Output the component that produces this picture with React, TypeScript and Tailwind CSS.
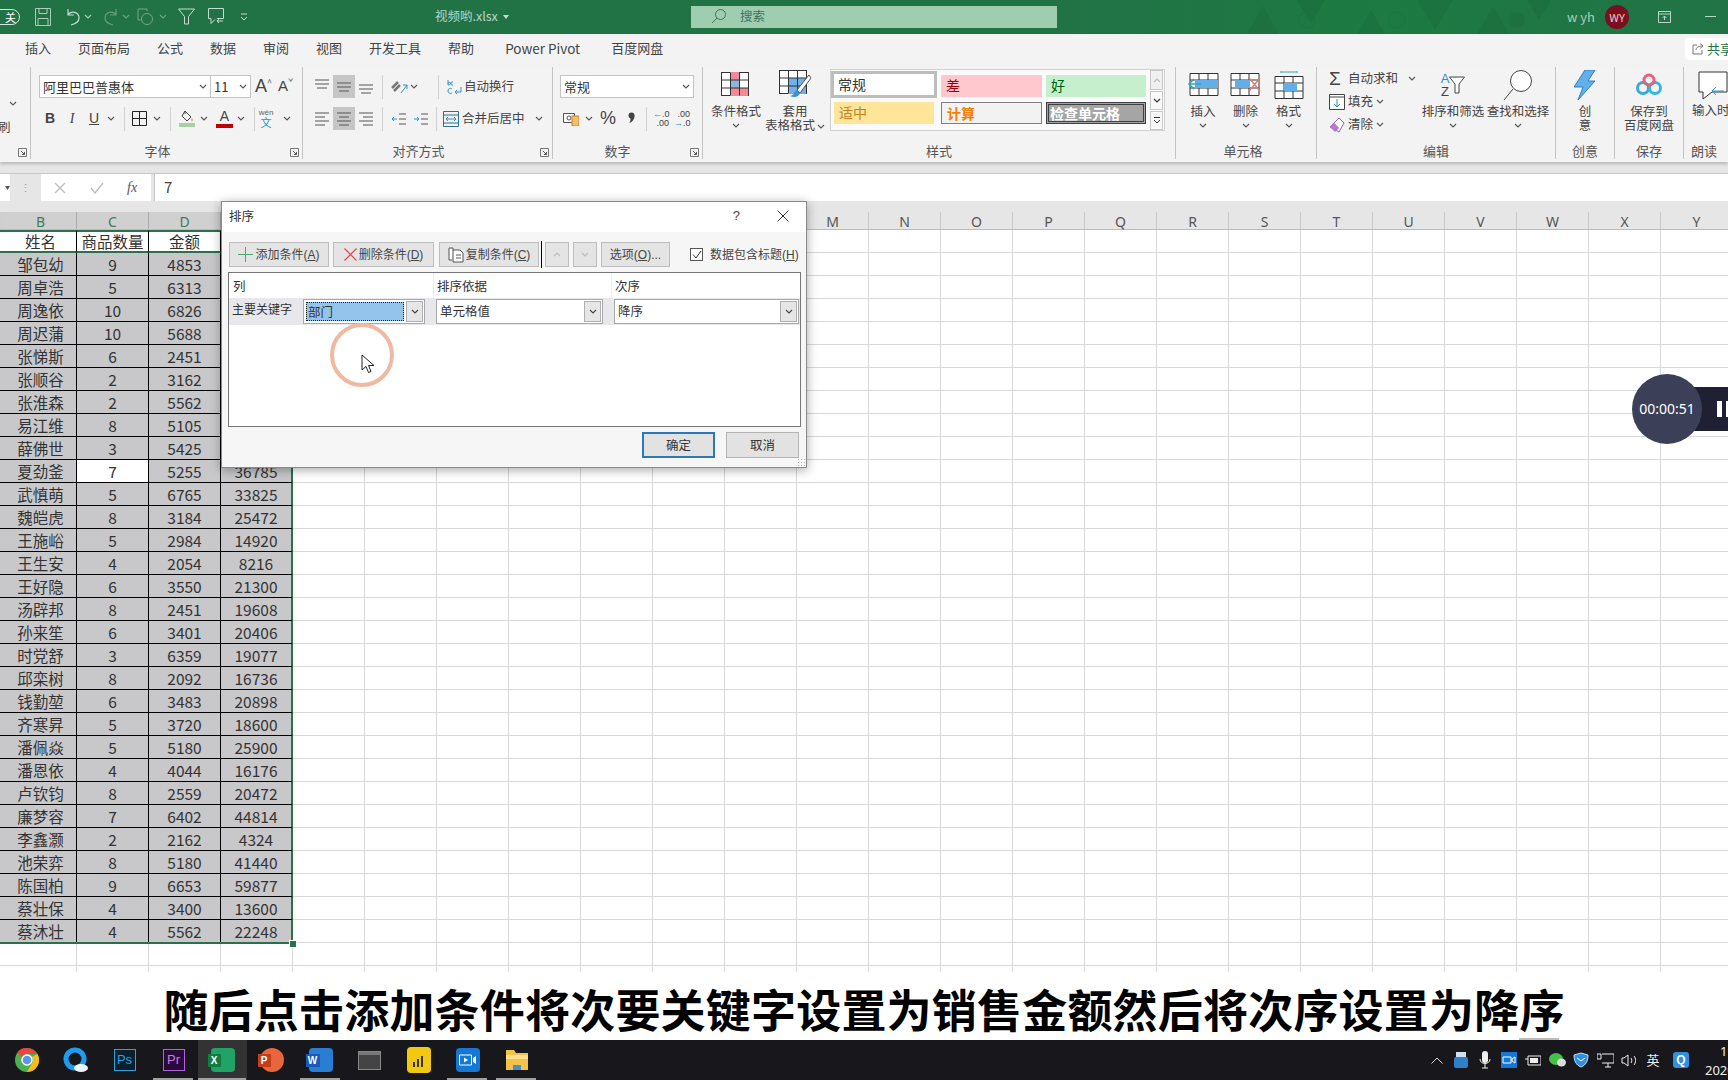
import React from "react";

const people: [string, number, number][] = [
  ["邹包幼", 9, 4853], ["周卓浩", 5, 6313], ["周逸依", 10, 6826], ["周迟蒲", 10, 5688], ["张悌斯", 6, 2451],
  ["张顺谷", 2, 3162], ["张淮森", 2, 5562], ["易江维", 8, 5105], ["薛佛世", 3, 5425], ["夏劲釜", 7, 5255],
  ["武慎萌", 5, 6765], ["魏皑虎", 8, 3184], ["王施峪", 5, 2984], ["王生安", 4, 2054], ["王好隐", 6, 3550],
  ["汤辟邦", 8, 2451], ["孙来笙", 6, 3401], ["时党舒", 3, 6359], ["邱栾树", 8, 2092], ["钱勤堃", 6, 3483],
  ["齐寒昇", 5, 3720], ["潘佩焱", 5, 5180], ["潘恩依", 4, 4044], ["卢钦钧", 8, 2559], ["廉梦容", 7, 6402],
  ["李鑫灏", 2, 2162], ["池荣弈", 8, 5180], ["陈国柏", 9, 6653], ["蔡壮保", 4, 3400], ["蔡沐壮", 4, 5562],
];
const restCols = "FGHIJKLMNOPQRSTUVWXY".split("");

const Chev = ({ c = "#555", className = "" }: { c?: string; className?: string }) => (
  <svg width="8" height="5" viewBox="0 0 8 5" className={className}><path d="M1 1l3 3 3-3" fill="none" stroke={c} strokeWidth="1.1" /></svg>
);
const Sep = () => <div className="w-px h-[24px] bg-[#d0d0d0] shrink-0" />;
const Launcher = () => (
  <svg width="9" height="9" viewBox="0 0 9 9" className="absolute right-[3px] bottom-[2px]"><path d="M.5 8.500v-8h8v8z" fill="none" stroke="#777" /><path d="M3 3l3.500 3.500M6.500 4v2.500H4" fill="none" stroke="#555" /></svg>
);

function Group({ w, label, labelClass = "", children }: { w: string; label?: string; labelClass?: string; children?: React.ReactNode }) {
  return (
    <div className={`relative shrink-0 h-[92px] flex flex-col border-r border-[#c4c4c4] ${w}`}>
      <div className="h-[76px] overflow-hidden">{children}</div>
      <div className={`h-[16px] leading-[16px] text-[13px] text-[#555] text-center whitespace-nowrap ${labelClass}`}>{label}</div>
    </div>
  );
}

function Big({ w, icon, lines, chev = true }: { w: string; icon: React.ReactNode; lines: string[]; chev?: boolean }) {
  return (
    <div className={`flex flex-col items-center pt-[4px] shrink-0 ${w}`}>
      <div className="h-[28px] flex items-center justify-center">{icon}</div>
      <div className="mt-[5px] text-[12.500px] leading-[14px] text-[#444] text-center whitespace-nowrap">
        {lines.map((l) => <div key={l}>{l}</div>)}
      </div>
      {chev && lines.length === 1 && <Chev className="mt-[5px]" />}
    </div>
  );
}

const Lines = ({ a }: { a: "l" | "c" | "r" }) => {
  const x = a === "l" ? 1 : a === "c" ? 3 : 5;
  return (
    <svg width="16" height="16" viewBox="0 0 16 16">
      {[2, 6, 10, 14].map((y, i) => <path key={y} d={`M${i % 2 ? x : 1} ${y}h${i % 2 ? 10 : 14}`} stroke="#555" />)}
    </svg>
  );
};
const VLines = ({ y }: { y: number }) => (
  <svg width="16" height="16" viewBox="0 0 16 16"><path d={`M1 ${y}h14M1 ${y + 4}h14M3 ${y + 8}h10`} stroke="#555" /></svg>
);

const CellGrid = ({ children }: { children?: React.ReactNode }) => (
  <svg width="30" height="26" viewBox="0 0 30 26">
    <rect x=".5" y=".5" width="27" height="23" fill="#fff" stroke="#333" />
    {children}
    <path d="M9.500 .5v23M18.500 .5v23M.5 8h27M.5 16h27" stroke="#333" fill="none" />
  </svg>
);

const StyleCell = ({ className, children }: { className: string; children: string }) => (
  <div className={`h-[22px] leading-[20px] pl-[5px] text-[14px] whitespace-nowrap ${className}`}>{children}</div>
);

const ToolBtn = ({ w, children }: { w: string; children: React.ReactNode }) => (
  <div className={`h-[25px] flex items-center justify-center gap-[2px] bg-[#e4e4e4] border border-[#bdbdbd] text-[12px] text-[#444] whitespace-nowrap shrink-0 ${w}`}>{children}</div>
);
const Key = ({ k, after = "" }: { k: string; after?: string }) => (
  <span className="font-['Liberation_Sans',sans-serif]">(<u>{k}</u>){after}</span>
);

const Combo = ({ w, text, sel }: { w: string; text: string; sel?: boolean }) => (
  <div className={`h-[25px] flex items-center bg-white border border-[#a8a8a8] shrink-0 ${w}`}>
    <div className="flex-1 h-full p-[2px] min-w-0">
      <div className={`h-full pl-[1px] text-[12.500px] leading-[17px] text-[#333] ${sel ? "bg-[#94c4ec] border border-dotted border-[#222]" : ""}`}>{text}</div>
    </div>
    <div className="w-[17px] h-[21px] mr-[1px] bg-[#e6e6e6] border border-[#b0b0b0] flex items-center justify-center"><Chev c="#444" /></div>
  </div>
);

function TitleBar() {
  return (
    <div className="h-[34px] shrink-0 flex items-center overflow-hidden pb-[1px] bg-[linear-gradient(90deg,#217346_0%,#217346_62%,#1d7a42_80%,#217346_100%)] text-[#b9d6c6]">
      <div className="ml-[-12px] w-[32px] h-[16px] rounded-full border border-[#d5e6dc] text-[11px] leading-[14px] text-right pr-[3px] text-white">关</div>
      <svg width="16" height="18" viewBox="0 0 16 18" className="ml-[15px]"><path d="M.5.5h15v17H.5zM4 .5v5h8v-5M3 17.500v-7h10v7" fill="none" stroke="#a9cdb9" /></svg>
      <svg width="16" height="18" viewBox="0 0 16 18" className="ml-[14px]"><path d="M3 1v6h6M3 7c3-5 11-3 11 3 0 4-4 6-8 7" fill="none" stroke="#c6dccf" strokeWidth="1.2" /></svg>
      <Chev c="#a9cdb9" className="ml-[3px]" />
      <svg width="16" height="18" viewBox="0 0 16 18" className="ml-[11px] opacity-40"><path d="M13 1v6H7M13 7C10 2 2 4 2 10c0 4 4 6 8 7" fill="none" stroke="#c6dccf" strokeWidth="1.2" /></svg>
      <Chev c="#6ea386" className="ml-[3px]" />
      <svg width="17" height="18" viewBox="0 0 17 18" className="ml-[7px] opacity-50"><path d="M10 3V1H1v11h3" fill="none" stroke="#c6dccf" /><circle cx="10" cy="11" r="5.500" fill="none" stroke="#c6dccf" /></svg>
      <Chev c="#6ea386" className="ml-[5px]" />
      <svg width="17" height="17" viewBox="0 0 17 17" className="ml-[11px]"><path d="M.5 1h16L10.500 8.500V16h-4V8.500z" fill="none" stroke="#c6dccf" /></svg>
      <svg width="16" height="17" viewBox="0 0 16 17" className="ml-[13px]"><path d="M.5.5h15v10H9M.5.5v10H3v5l4-4M15 13H9l2-2M9 13l2 2" fill="none" stroke="#c6dccf" /></svg>
      <svg width="8" height="8" viewBox="0 0 8 8" className="ml-[16px]"><path d="M1 1h6M1 4l3 3 3-3" fill="none" stroke="#c6dccf" /></svg>
      <div className="ml-[187px] text-[12.500px] w-[62px] whitespace-nowrap">视频哟.xlsx</div>
      <svg width="6" height="4" viewBox="0 0 6 4" className="ml-[6px]"><path d="M0 0h6L3 4z" fill="#c6dccf" /></svg>
      <div className="ml-[182px] w-[366px] h-[22px] bg-[#9fcdb0] flex items-center text-[12.500px] text-[#41725a]">
        <svg width="15" height="15" viewBox="0 0 15 15" className="ml-[20px]"><circle cx="9.500" cy="5.500" r="5" fill="none" stroke="#41725a" /><path d="M6 9l-5 5" stroke="#41725a" /></svg>
        <span className="ml-[14px]">搜索</span>
      </div>
      <div className="relative flex-1 h-full flex items-center">
        <svg width="400" height="34" viewBox="0 0 400 34" className="absolute left-[130px] top-0 opacity-15">
          <path d="M60 34l16-28 16 28zM110 0l14 24 14-24zM170 34l14-24 14 24zM230 0l18 30 18-30zM290 34l16-28 16 28zM340 0l12 20 12-20z" fill="#14552f" />
          <circle cx="120" cy="20" r="8" fill="none" stroke="#14552f" /><circle cx="210" cy="20" r="8" fill="none" stroke="#14552f" /><circle cx="330" cy="20" r="8" fill="#14552f" />
        </svg>
        <span className="relative ml-[510px] text-[13px] text-[#a8d0b8] whitespace-nowrap">w yh</span>
        <div className="relative ml-[10px] w-[24px] h-[24px] rounded-full bg-[#7a0f22] text-[#e8c8c8] text-[11px] leading-[24px] text-center">WY</div>
        <svg width="13" height="12" viewBox="0 0 13 12" className="relative ml-[29px]"><path d="M.5.5h12v11H.5zM.5 3h12M6.500 9V5M4.500 7l2-2 2 2" fill="none" stroke="#b9d6c6" /></svg>
        <div className="relative ml-[34px] w-[11px] h-px bg-[#b9d6c6]" />
      </div>
    </div>
  );
}

function TabRow() {
  return (
    <div className="h-[32px] shrink-0 flex items-center pl-[25px] pb-[4px] gap-[27px] bg-[#f3f3f3] text-[13px] text-[#444] relative whitespace-nowrap">
      {["插入", "页面布局", "公式", "数据", "审阅", "视图", "开发工具", "帮助"].map((t) => <span key={t}>{t}</span>)}
      <span className="ml-[4px] text-[13.500px]">Power Pivot</span>
      <span className="ml-[4px]">百度网盘</span>
      <div className="absolute left-[1685px] top-[4px] w-[50px] h-[22px] bg-white flex items-center pl-[7px] gap-[3px] text-[#217346] text-[13px] rounded-sm">
        <svg width="12" height="12" viewBox="0 0 12 12"><path d="M5 2H1v9h9V7M4 7c0-3 3-4 7-4M8 .5L11 3 8 5.500" fill="none" stroke="#777" /></svg>
        共享
      </div>
    </div>
  );
}

function Ribbon() {
  return (
    <div className="relative z-10 h-[96px] shrink-0 bg-[#f3f3f3] flex pt-[1px] overflow-hidden shadow-[0_2px_3px_rgba(0,0,0,0.2)]">
      <Group w="w-[31px]">
        <Chev className="ml-[9px] mt-[34px] block" />
        <div className="text-[12.500px] leading-[14px] text-[#444] ml-[-2px] mt-[14px]">刷</div>
        <Launcher />
      </Group>
      <Group w="w-[272px]" label="字体" labelClass="pr-[18px]">
        <div className="pt-[8px] pl-[8px]">
          <div className="h-[23px] flex items-center">
            <div className="w-[172px] h-[23px] bg-white border border-[#c4c4c4] flex items-center justify-between px-[3px] text-[13px] text-[#333] whitespace-nowrap">阿里巴巴普惠体<Chev /></div>
            <div className="w-[40px] h-[23px] bg-white border border-l-0 border-[#c4c4c4] flex items-center justify-between px-[3px] text-[13px] text-[#333]">11<Chev /></div>
            <span className="ml-[4px] text-[18px] text-[#444] font-['Liberation_Sans',sans-serif]">A</span><span className="text-[9px] mb-[8px] text-[#555]">^</span>
            <span className="ml-[6px] text-[15px] text-[#444] font-['Liberation_Sans',sans-serif]">A</span><span className="text-[9px] mb-[8px] text-[#555]">ˇ</span>
          </div>
          <div className="h-[23px] mt-[9px] flex items-center font-['Liberation_Sans',sans-serif] text-[#444]">
            <span className="w-[20px] text-center text-[14px] font-bold ml-[1px]">B</span>
            <span className="w-[20px] ml-[2px] text-center text-[14px] italic font-['Liberation_Serif',serif]">I</span>
            <span className="w-[20px] ml-[2px] text-center text-[14px] underline">U</span>
            <div className="w-[14px] flex justify-center"><Chev /></div>
            <div className="ml-[6px]"><Sep /></div>
            <svg width="15" height="15" viewBox="0 0 15 15" className="ml-[7px]"><path d="M.5.5h14v14H.5zM7.500.5v14M.5 7.500h14" fill="none" stroke="#222" /></svg>
            <div className="w-[14px] ml-[3px] flex justify-center"><Chev /></div>
            <div className="ml-[6px]"><Sep /></div>
            <svg width="16" height="17" viewBox="0 0 16 17" className="ml-[8px]"><path d="M6 1l6 6-4 4-5-5zM6 4V1" fill="none" stroke="#444" /><path d="M13 8c1 2 1 3 0 3s-1-1 0-3" fill="#b0a030" /><rect y="13" width="16" height="4" fill="#a8d0a0" /></svg>
            <div className="w-[14px] ml-[2px] flex justify-center"><Chev /></div>
            <div className="ml-[5px] w-[17px] h-[18px] flex flex-col items-center"><span className="text-[14px] leading-[13px]">A</span><span className="w-[17px] h-[4px] mt-[1px] bg-[#c00000]" /></div>
            <div className="w-[14px] ml-[1px] flex justify-center"><Chev /></div>
            <div className="ml-[6px]"><Sep /></div>
            <div className="ml-[4px] w-[14px] flex flex-col items-center leading-none"><span className="text-[8px] text-[#666]">wén</span><span className="text-[11px] text-[#2f8fc8] font-['Noto_Sans_CJK_SC',sans-serif]">文</span></div>
            <div className="w-[14px] ml-[7px] flex justify-center"><Chev /></div>
          </div>
        </div>
        <Launcher />
      </Group>
      <Group w="w-[250px]" label="对齐方式" labelClass="pr-[18px]">
        <div className="pt-[8px] pl-[11px] text-[12.500px] text-[#444]">
          <div className="h-[23px] flex items-center">
            <VLines y={1} />
            <div className="ml-[3px] w-[22px] h-[23px] bg-[#c6c6c6] flex items-center justify-center"><VLines y={4} /></div>
            <div className="ml-[3px]"><VLines y={6} /></div>
            <div className="ml-[8px]"><Sep /></div>
            <svg width="18" height="16" viewBox="0 0 18 16" className="ml-[8px]"><path d="M1 9l6-6M3 12l6-6" stroke="#777" strokeWidth="2.500" /><path d="M10 14l6-8M12 6h4v4" fill="none" stroke="#2f8fc8" /></svg>
            <Chev className="ml-[1px]" />
            <div className="ml-[20px]"><Sep /></div>
            <svg width="15" height="18" viewBox="0 0 15 18" className="ml-[8px]"><path d="M1 2v5M1 5c3-2 4 2 0 2M6 4c-3-1-3 4 0 3M1 13c0-3 3-3 4-2M5 15c-2 1-4 0-4-2M14 9v5H8l2-2M8 14l2 2" fill="none" stroke="#2f8fc8" /></svg>
            <span className="ml-[2px] whitespace-nowrap">自动换行</span>
          </div>
          <div className="h-[23px] mt-[9px] flex items-center">
            <Lines a="l" />
            <div className="ml-[3px] w-[22px] h-[23px] bg-[#c6c6c6] flex items-center justify-center"><Lines a="c" /></div>
            <div className="ml-[3px]"><Lines a="r" /></div>
            <div className="ml-[8px]"><Sep /></div>
            <svg width="16" height="14" viewBox="0 0 16 14" className="ml-[8px]"><path d="M8 2h7M8 7h7M8 12h7" stroke="#555" /><path d="M1 7h5M3 5L1 7l2 2" fill="none" stroke="#2f8fc8" /></svg>
            <svg width="16" height="14" viewBox="0 0 16 14" className="ml-[6px]"><path d="M8 2h7M8 7h7M8 12h7" stroke="#555" /><path d="M1 7h5M4 5l2 2-2 2" fill="none" stroke="#2f8fc8" /></svg>
            <div className="ml-[7px]"><Sep /></div>
            <svg width="16" height="16" viewBox="0 0 16 16" className="ml-[6px]"><path d="M.5.5h15v15H.5zM.5 4h15M.5 12h15" fill="none" stroke="#2f6f8f" /><path d="M3 8h10M5 6L3 8l2 2M11 6l2 2-2 2" fill="none" stroke="#2f8fc8" /></svg>
            <span className="ml-[3px] whitespace-nowrap">合并后居中</span>
            <Chev className="ml-[10px]" />
          </div>
        </div>
        <Launcher />
      </Group>
      <Group w="w-[150px]" label="数字" labelClass="pr-[20px]">
        <div className="pt-[8px] pl-[7px] text-[#444]">
          <div className="w-[134px] h-[23px] bg-white border border-[#c4c4c4] flex items-center justify-between px-[3px] text-[13px] text-[#333]">常规<Chev /></div>
          <div className="h-[23px] mt-[9px] flex items-center">
            <svg width="16" height="14" viewBox="0 0 16 14" className="ml-[3px]"><path d="M.5 1.500h11v9H.5z" fill="#fff" stroke="#555" /><circle cx="6" cy="6" r="2" fill="none" stroke="#555" /><rect x="9" y="4" width="7" height="10" fill="#f0c070" stroke="#d08020" /></svg>
            <Chev className="ml-[6px]" />
            <span className="ml-[7px] text-[18px] font-['Liberation_Sans',sans-serif] w-[16px]">%</span>
            <svg width="7" height="11" viewBox="0 0 7 11" className="ml-[12px] mr-[3px] mb-[3px]"><circle cx="3.500" cy="3.500" r="3" fill="#444" /><path d="M6.500 4c0 3-2 6-5 7 1-2 1-4 1-5z" fill="#444" /></svg>
            <div className="ml-[8px]"><Sep /></div>
            <div className="ml-[6px] w-[16px] text-[9px] leading-[9px] text-right font-['Liberation_Sans',sans-serif]"><span className="text-[#2f8fc8]">←</span>.0<br />.00</div>
            <div className="ml-[5px] w-[16px] text-[9px] leading-[9px] text-right font-['Liberation_Sans',sans-serif]">.00<br /><span className="text-[#2f8fc8]">→</span>.0</div>
          </div>
        </div>
        <Launcher />
      </Group>
      <Group w="w-[473px]" label="样式">
        <div className="flex h-full">
          <Big w="w-[62px] ml-[2px]" lines={["条件格式"]} icon={
            <CellGrid><rect x="9" y="0" width="9" height="8" fill="#f08a96" /><rect x="9" y="8" width="9" height="8" fill="#8fb4e0" /><rect x="9" y="16" width="18" height="8" fill="#f08a96" /></CellGrid>
          } />
          <div className="w-[56px] flex flex-col items-center pt-[4px] shrink-0">
            <div className="h-[28px] flex items-center">
              <svg width="32" height="30" viewBox="0 0 32 30"><rect x=".5" y=".5" width="27" height="23" fill="#fff" stroke="#333" /><rect x="9" y="8" width="18" height="16" fill="#6fb0e8" /><path d="M9.500 .5v23M18.500 .5v23M.5 8h27M.5 16h27" stroke="#333" fill="none" /><path d="M30 5L18 20l3 3L32 8z" fill="#fff" stroke="#555" /><path d="M18 20c-3 1-2 5-7 6 4 2 9 1 10-3z" fill="#3f90d0" /></svg>
            </div>
            <div className="mt-[5px] text-[12.500px] leading-[14px] text-[#444] text-center whitespace-nowrap">套用<br />表格格式<Chev className="inline ml-[2px]" /></div>
          </div>
          <div className="ml-[7px] mt-[2px] h-[62px] w-[335px] flex bg-[#fafafa] border border-[#d0d0d0] shrink-0">
            <div className="w-[319px] h-[60px] grid grid-cols-[106px_101px_100px] content-start gap-x-[4px] gap-y-[4px] pt-[1px]">
              <div className="h-[27px] border-[3px] border-[#bdbdbd] bg-white text-[14px] leading-[21px] pl-[4px] text-[#333]">常规</div>
              <StyleCell className="mt-[4px] bg-[#ffc7ce] text-[#9c0006]">差</StyleCell>
              <StyleCell className="mt-[4px] bg-[#c6efce] text-[#006100]">好</StyleCell>
              <StyleCell className="ml-[3px] w-[100px] bg-[#ffe599] text-[#c8811a]">适中</StyleCell>
              <StyleCell className="bg-[#f2f2f2] border border-[#7f7f7f] text-[#fa7d00] font-bold">计算</StyleCell>
              <StyleCell className="bg-[#a5a5a5] border-[3px] border-double border-[#3f3f3f] text-white font-bold !pl-[1px] !leading-[16px]">检查单元格</StyleCell>
            </div>
            <div className="w-[13px] flex flex-col text-[#777] gap-[1px]">
              <div className="h-[20px] border border-[#c8c8c8] bg-[#f0f0f0] flex items-center justify-center"><Chev c="#bbb" className="rotate-180" /></div>
              <div className="h-[19px] border border-[#c8c8c8] bg-[#f8f8f8] flex items-center justify-center"><Chev c="#333" /></div>
              <div className="h-[19px] border border-[#c8c8c8] bg-[#f8f8f8] flex items-center justify-center"><svg width="8" height="7" viewBox="0 0 8 7"><path d="M1 .5h6M1 3l3 3 3-3" fill="none" stroke="#333" /></svg></div>
            </div>
          </div>
        </div>
      </Group>
      <Group w="w-[141px]" label="单元格" labelClass="pr-[6px]">
        <div className="flex pl-[6px]">
          <Big w="w-[42px]" lines={["插入"]} icon={
            <svg width="32" height="26" viewBox="0 0 32 26"><path d="M3 1.500h28v22H3zM3 8h28M3 16h28M12 1.500v22M21 1.500v22" fill="#fff" stroke="#333" /><rect x="8" y="8" width="23" height="8" fill="#62aee8" /><path d="M14 12H2M7 7l-5 5 5 5" fill="none" stroke="#35a5b5" strokeWidth="1.500" /></svg>
          } />
          <Big w="w-[43px]" lines={["删除"]} icon={
            <svg width="32" height="26" viewBox="0 0 32 26"><path d="M1 1.500h28v22H1zM1 8h28M1 16h28M10 1.500v22M19 1.500v22" fill="#fff" stroke="#333" /><rect x="5" y="8" width="15" height="8" fill="#62aee8" /><path d="M19 6l11 13M30 6L19 19" stroke="#e87878" strokeWidth="1.500" /></svg>
          } />
          <Big w="w-[43px]" lines={["格式"]} icon={
            <svg width="30" height="28" viewBox="0 0 30 28"><path d="M1 5.500h28v22H1zM1 12h28M1 20h28M10 5.500v22M19 5.500v22" fill="#fff" stroke="#333" /><rect x="10" y="12" width="13" height="8" fill="#62aee8" /><path d="M7 1h16M7 0v2M23 0v2" stroke="#35a5b5" /></svg>
          } />
        </div>
      </Group>
      <Group w="w-[239px]" label="编辑">
        <div className="flex">
          <div className="w-[124px] pl-[12px] text-[12.500px] text-[#444] shrink-0">
            <div className="h-[23px] flex items-center whitespace-nowrap"><span className="w-[14px] text-[19px] leading-none text-[#444] font-['Liberation_Sans',sans-serif]">Σ</span><span className="ml-[5px]">自动求和</span><Chev className="ml-[10px]" /></div>
            <div className="h-[23px] flex items-center whitespace-nowrap"><svg width="16" height="16" viewBox="0 0 16 16"><path d="M.5.5h15v15H.5zM.5 3h15" fill="#fff" stroke="#444" /><path d="M8 5v8M5 10l3 3 3-3" fill="none" stroke="#2f8fc8" /></svg><span className="ml-[3px]">填充</span><Chev className="ml-[3px]" /></div>
            <div className="h-[23px] flex items-center whitespace-nowrap"><svg width="16" height="16" viewBox="0 0 16 16"><path d="M10 1l5 5-5 9-9-5z" fill="#fff" stroke="#a060b8" /><path d="M5.500 6L1 10l5 5 4-4z" fill="#b878cc" /></svg><span className="ml-[3px]">清除</span><Chev className="ml-[3px]" /></div>
          </div>
          <Big w="w-[58px] ml-[-17px]" lines={["排序和筛选"]} icon={
            <div className="flex items-center">
              <div className="text-[13px] leading-[13px] font-['Liberation_Sans',sans-serif] text-center"><div className="text-[#2f8fc8]">A</div><div className="text-[#444]">Z</div></div>
              <svg width="16" height="18" viewBox="0 0 16 18"><path d="M.5 1h15L10 8v9H6V8z" fill="#fff" stroke="#444" /></svg>
            </div>
          } />
          <Big w="w-[62px] ml-[5px]" lines={["查找和选择"]} icon={
            <svg width="30" height="32" viewBox="0 0 30 32"><circle cx="18" cy="12" r="10.500" fill="#fff" stroke="#444" /><path d="M10 20L1 31" stroke="#444" /></svg>
          } />
        </div>
      </Group>
      <Group w="w-[59px]" label="创意">
        <Big w="w-full" lines={["创", "意"]} chev={false} icon={
          <svg width="22" height="30" viewBox="0 0 22 30"><path d="M11 0h10l-7 11h7L4 30l5-13H0z" fill="#62b0ea" stroke="#2f7fbf" /></svg>
        } />
      </Group>
      <Group w="w-[69px]" label="保存">
        <Big w="w-full" lines={["保存到", "百度网盘"]} chev={false} icon={
          <svg width="28" height="26" viewBox="0 0 28 26"><circle cx="8" cy="16" r="5.500" fill="none" stroke="#38a9d8" strokeWidth="3" /><circle cx="20" cy="16" r="5.500" fill="none" stroke="#38b8d8" strokeWidth="3" /><circle cx="14" cy="8" r="5" fill="none" stroke="#e8607a" strokeWidth="3" /></svg>
        } />
      </Group>
      <div className="relative w-[44px] h-[92px] shrink-0 flex flex-col">
        <div className="h-[76px] overflow-hidden whitespace-nowrap pl-[10px] pt-[4px]">
          <svg width="34" height="30" viewBox="0 0 34 30"><path d="M5 1h28v20H18l-9 7v-7H5z" fill="#fff" stroke="#333" /><path d="M30 20H18l4-4M18 20l4 4" fill="none" stroke="#2f8fc8" /></svg>
          <div className="mt-[2px] text-[12.500px] leading-[14px] text-[#444] ml-[-2px]">输入时</div>
        </div>
        <div className="h-[16px] leading-[16px] text-[13px] text-[#555] pl-[7px] whitespace-nowrap">朗读</div>
      </div>
    </div>
  );
}

function FormulaBar() {
  return (
    <div className="h-[50px] shrink-0 bg-[#e6e6e6] pt-[11px]">
      <div className="h-[28px] flex border-t border-[#c8c8c8]">
        <div className="w-[10px] bg-white flex items-center justify-end"><svg width="5" height="4" viewBox="0 0 5 4"><path d="M0 0h5L2.500 4z" fill="#555" /></svg></div>
        <div className="w-[31px] flex justify-center items-center text-[#999] text-[11px] leading-none">⋮</div>
        <div className="w-[110px] bg-white flex items-center text-[#aaa]">
          <svg width="12" height="12" viewBox="0 0 12 12" className="ml-[13px]"><path d="M1 1l10 10M11 1L1 11" stroke="#bbb" strokeWidth="1.300" /></svg>
          <svg width="14" height="12" viewBox="0 0 14 12" className="ml-[24px]"><path d="M1 6l4 5 8-10" fill="none" stroke="#bbb" strokeWidth="1.300" /></svg>
          <span className="ml-[23px] text-[14px] italic text-[#555] font-['Liberation_Serif',serif]">fx</span>
        </div>
        <div className="ml-[3px] flex-1 bg-white border-l border-[#c8c8c8] pl-[9px] text-[15px] leading-[25px] text-[#444]">7</div>
      </div>
    </div>
  );
}

function Sheet() {
  const sel = "w-[72px] shrink-0 h-full bg-[#c8c8cb] border-r border-b border-black text-center leading-[23px]";
  const blank = "w-[72px] shrink-0 h-full border-r border-b border-[#d8d8d8]";
  return (
    <div className="relative h-[760px] shrink-0 overflow-hidden bg-white text-[15.500px] text-[#333]">
      <div className="flex h-[18px] bg-[#e6e6e6] text-[14px] leading-[19px] text-center border-b border-[#bbb] font-['Noto_Sans',sans-serif]">
        <div className="w-[5px] shrink-0 bg-[#cfcfcf]" />
        {["B", "C", "D", "E"].map((c) => <div key={c} className="w-[72px] shrink-0 bg-[#d0d0d0] border-r border-[#aaa] text-[#3f7a5c]">{c}</div>)}
        {restCols.map((c) => <div key={c} className="w-[72px] shrink-0 border-r border-[#c8c8c8] text-[#555]">{c}</div>)}
      </div>
      <div className="flex h-[23px]">
        <div className="w-[5px] shrink-0 bg-white border-y-2 border-[#2d6e4e]" />
        {["姓名", "商品数量", "金额", "销售额"].map((t, i) => (
          <div key={t} className={`w-[72px] shrink-0 h-full bg-white border-y-2 border-[#2d6e4e] text-center leading-[19px] ${i < 3 ? "border-r border-r-black" : "border-r-2 border-r-[#2d6e4e]"}`}>{t}</div>
        ))}
        {restCols.map((c) => <div key={c} className={blank} />)}
      </div>
      {people.map(([n, q, p], i) => (
        <div key={n} className="flex h-[23px]">
          <div className="w-[5px] shrink-0 h-full bg-[#c8c8cb] border-b border-black" />
          <div className={sel}>{n}</div>
          <div className={i === 9 ? "w-[72px] shrink-0 h-full bg-white border-r border-b border-black text-center leading-[23px]" : sel}>{q}</div>
          <div className={sel}>{p}</div>
          <div className="w-[72px] shrink-0 h-full bg-[#c8c8cb] border-r-2 border-r-[#2d6e4e] border-b border-black text-center leading-[23px]">{q * p}</div>
          {restCols.map((c) => <div key={c} className={blank} />)}
        </div>
      ))}
      {[0, 1].map((r) => (
        <div key={r} className="flex h-[23px]">
          <div className="w-[5px] shrink-0 h-full border-b border-[#d8d8d8]" />
          {["B", "C", "D", "E", ...restCols].map((c) => <div key={c} className={blank} />)}
        </div>
      ))}
      <div className="absolute left-0 top-[730px] w-[293px] h-[2px] bg-[#2d6e4e]" />
      <div className="absolute left-[289px] top-[728px] w-[6px] h-[6px] bg-[#2d6e4e] border border-white box-content" />
    </div>
  );
}

const appIcon = "w-[49px] h-[40px] flex items-center justify-center shrink-0 relative";
const Under = ({ w = "w-[40px]" }: { w?: string }) => <div className={`absolute bottom-0 left-[4px] h-[2px] bg-[#a0a0a0] ${w}`} />;

function Taskbar() {
  return (
    <div className="relative h-[40px] shrink-0 bg-[#18181c] flex items-center pl-[2px] overflow-hidden font-['Liberation_Sans',sans-serif]">
      <div className={appIcon}>
        <svg width="24" height="24" viewBox="0 0 24 24"><circle cx="12" cy="12" r="12" fill="#4caf50" /><path d="M12 0a12 12 0 0 1 10.400 6H12a6 6 0 0 0-5.500 3.500L2.500 4A12 12 0 0 1 12 0z" fill="#e8453c" /><path d="M22.400 6A12 12 0 0 1 12 24l5-8.500A6 6 0 0 0 17 9z" fill="#f9bc15" /><circle cx="12" cy="12" r="5" fill="#5a95e8" stroke="#fff" strokeWidth="1.500" /></svg>
      </div>
      <div className={appIcon}>
        <svg width="26" height="26" viewBox="0 0 26 26"><circle cx="12" cy="12" r="9" fill="none" stroke="#1e9cf0" strokeWidth="5" /><ellipse cx="18" cy="21" rx="7" ry="4" fill="#eef4fa" /></svg>
      </div>
      <div className={appIcon}><div className="w-[22px] h-[22px] bg-[#0a2030] border border-[#2fa3d8] text-[#2fa3d8] text-[13px] leading-[20px] text-center">Ps</div></div>
      <div className={appIcon}><div className="w-[22px] h-[22px] bg-[#2a0a38] border border-[#b060d8] text-[#c080e8] text-[13px] leading-[20px] text-center">Pr</div><Under /></div>
      <div className={`${appIcon} bg-[#333336]`}>
        <div className="w-[24px] h-[24px] bg-[#21a366] rounded-sm relative"><div className="absolute left-[-3px] top-[6px] w-[13px] h-[13px] bg-[#107c41] text-white text-[10px] font-bold leading-[13px] text-center">X</div></div>
        <Under w="w-[48px] !left-0" />
      </div>
      <div className={appIcon}>
        <div className="w-[24px] h-[24px] rounded-full bg-[#e8663c] relative"><div className="absolute left-[-2px] top-[6px] w-[13px] h-[13px] bg-[#c43e1c] text-white text-[10px] font-bold leading-[13px] text-center">P</div></div>
      </div>
      <div className={appIcon}>
        <div className="w-[24px] h-[24px] bg-[#2b7cd3] rounded-sm relative"><div className="absolute left-[-3px] top-[6px] w-[14px] h-[13px] bg-[#185abd] text-white text-[10px] font-bold leading-[13px] text-center">W</div></div>
        <Under />
      </div>
      <div className={appIcon}><div className="w-[23px] h-[19px] bg-[#444] border border-[#888]"><div className="w-full h-[3px] bg-[#777]" /></div></div>
      <div className={appIcon}>
        <div className="w-[24px] h-[26px] bg-[#f2c811] rounded-sm flex items-center justify-center">
          <svg width="14" height="13" viewBox="0 0 14 13"><path d="M1 13V8h2v5zM5 13V5h2v8zM9 13V2h2v11z" fill="#333" /></svg>
        </div>
      </div>
      <div className={appIcon}>
        <div className="w-[24px] h-[24px] bg-[#1478d4] rounded-sm flex items-center justify-center">
          <svg width="18" height="14" viewBox="0 0 18 14"><path d="M.5 2h12v10H.5z" fill="none" stroke="#fff" /><path d="M5 4.500l4 2.500-4 2.500z" fill="#fff" /><path d="M14 5l3-2v8l-3-2z" fill="#fff" /></svg>
        </div>
        <Under />
      </div>
      <div className={appIcon}>
        <svg width="24" height="22" viewBox="0 0 24 22"><path d="M1 1h8l2 3h12v17H1z" fill="#f2c34a" /><rect x="1" y="6" width="22" height="4" fill="#ffe08a" /><path d="M8 21v-5h8v5z" fill="#4a90c8" /></svg>
        <Under />
      </div>
      <div className="ml-[884px] w-[24px] flex justify-center"><svg width="12" height="7" viewBox="0 0 12 7"><path d="M.5 6.500L6 1l5.500 5.500" fill="none" stroke="#ddd" /></svg></div>
      <div className="w-[24px] flex justify-center"><svg width="14" height="18" viewBox="0 0 14 18"><rect x="2" y="1" width="10" height="5" fill="#cfe0f0" /><rect y="6" width="14" height="11" rx="2" fill="#2f80c8" /></svg></div>
      <div className="w-[24px] flex justify-center"><svg width="12" height="18" viewBox="0 0 12 18"><rect x="3" width="6" height="12" rx="3" fill="#eee" /><path d="M1 8c0 6 10 6 10 0M6 13v4M3 17h6" fill="none" stroke="#eee" /></svg></div>
      <div className="w-[24px] flex justify-center"><svg width="16" height="16" viewBox="0 0 16 16"><rect width="16" height="16" fill="#1478d4" /><path d="M2 5h8v6H2zM11 7l3-2v6l-3-2z" fill="none" stroke="#fff" /></svg></div>
      <div className="w-[24px] flex justify-center"><svg width="16" height="12" viewBox="0 0 16 12"><path d="M3 2h13v9H3z" fill="none" stroke="#eee" /><rect x="5" y="4" width="8" height="5" fill="#eee" /><path d="M0 5h3" stroke="#eee" /></svg></div>
      <div className="w-[24px] flex justify-center"><svg width="17" height="14" viewBox="0 0 17 14"><ellipse cx="7" cy="6" rx="7" ry="6" fill="#45c04a" /><ellipse cx="12.500" cy="9.500" rx="4.500" ry="4" fill="#ddd" /></svg></div>
      <div className="w-[24px] flex justify-center"><svg width="16" height="16" viewBox="0 0 16 16"><path d="M8 1l7 2c0 6-2 10-7 12C3 13 1 9 1 3z" fill="#2f8fe0" stroke="#bfe0ff" /><path d="M4 6l4 3 4-3" fill="none" stroke="#fff" /></svg></div>
      <div className="w-[24px] flex justify-center"><svg width="17" height="15" viewBox="0 0 17 15"><path d="M5 1h12v9H5M0 1h4v5H0zM11 10v4M8 14h6" fill="none" stroke="#eee" /></svg></div>
      <div className="w-[24px] flex justify-center"><svg width="16" height="13" viewBox="0 0 16 13"><path d="M1 4h2l4-3v11L3 9H1zM10 4c1 1 1 4 0 5M13 2c2 2 2 7 0 9" fill="none" stroke="#eee" /></svg></div>
      <div className="w-[24px] text-center text-[13px] text-[#eee] font-['Noto_Sans_CJK_SC',sans-serif]">英</div>
      <div className="ml-[4px] w-[24px] flex justify-center"><div className="w-[16px] h-[16px] rounded-[3px] bg-[#2f8fe0] text-white text-[12px] font-bold leading-[16px] text-center">Q</div></div>
      <div className="absolute left-[1705px] top-[2px] w-[70px] text-[13px] leading-[19px] text-[#eee] whitespace-nowrap font-['Noto_Sans',sans-serif]">
        <div className="pl-[15px]">19:51</div><div>2020/1/1</div>
      </div>
    </div>
  );
}

function SortDialog() {
  return (
    <div className="absolute left-[221px] top-[201px] w-[586px] h-[267px] bg-[#f6f6f6] border border-[#8a8a8a] shadow-[0_2px_10px_rgba(0,0,0,0.35)] flex flex-col text-[#333]">
      <div className="h-[30px] bg-white shrink-0 flex items-center pl-[7px] pb-[2px] text-[12.500px]">
        排序
        <span className="ml-auto mr-[37px] text-[13px] font-['Liberation_Sans',sans-serif] text-[#444]">?</span>
        <svg width="12" height="12" viewBox="0 0 12 12" className="mr-[17px]"><path d="M.5.5l11 11M11.500.5l-11 11" stroke="#333" /></svg>
      </div>
      <div className="mt-[10px] h-[25px] ml-[7px] flex items-center shrink-0">
        <ToolBtn w="w-[100px]">
          <svg width="15" height="15" viewBox="0 0 15 15"><path d="M7.500 0v15M0 7.500h15" stroke="#4aa868" /></svg><span>添加条件<Key k="A" /></span>
        </ToolBtn>
        <ToolBtn w="w-[101px] ml-[4px]">
          <svg width="13" height="13" viewBox="0 0 13 13"><path d="M.5.5l12 12M12.500.5l-12 12" stroke="#e04848" strokeWidth="1.200" /></svg><span>删除条件<Key k="D" /></span>
        </ToolBtn>
        <ToolBtn w="w-[100px] ml-[5px]">
          <svg width="16" height="16" viewBox="0 0 16 16"><path d="M5 3V1H1v12h3M8 3h4l3 3v9H5V3z" fill="#fff" stroke="#555" /><path d="M8 8h5M8 11h5" stroke="#555" /></svg><span>复制条件<Key k="C" /></span>
        </ToolBtn>
        <div className="w-px h-[27px] bg-black ml-[2px]" />
        <ToolBtn w="w-[24px] ml-[3px]"><Chev c="#bbb" className="rotate-180" /></ToolBtn>
        <ToolBtn w="w-[24px] ml-[4px]"><Chev c="#bbb" /></ToolBtn>
        <ToolBtn w="w-[69px] ml-[4px]"><span>选项<Key k="O" after="..." /></span></ToolBtn>
        <div className="ml-[20px] w-[13px] h-[13px] border border-[#555] bg-white flex items-center justify-center shrink-0">
          <svg width="10" height="9" viewBox="0 0 10 9"><path d="M1 4.500L4 8l5-7" fill="none" stroke="#333" /></svg>
        </div>
        <span className="ml-[7px] text-[12px] text-[#444] whitespace-nowrap">数据包含标题<Key k="H" /></span>
      </div>
      <div className="mt-[5px] ml-[6px] w-[573px] h-[155px] bg-white border border-[#777] shrink-0 text-[12.500px]">
        <div className="h-[25px] flex">
          <div className="w-[205px] pl-[4px] leading-[25px] border-r border-[#eee]">列</div>
          <div className="w-[178px] pl-[3px] leading-[25px] border-r border-[#eee]">排序依据</div>
          <div className="pl-[3px] leading-[25px]">次序</div>
        </div>
        <div className="h-[27px] flex items-center bg-[#e8e8ec]">
          <div className="w-[74px] pl-[3px] text-[12px] whitespace-nowrap pb-[6px]">主要关键字</div>
          <Combo w="w-[122px]" text="部门" sel />
          <Combo w="w-[167px] ml-[11px]" text="单元格值" />
          <Combo w="w-[185px] ml-[11px]" text="降序" />
        </div>
      </div>
      <div className="mt-[5px] flex justify-end pr-[7px] gap-[11px] text-[12.500px]">
        <div className="w-[73px] h-[26px] bg-[#e2e2e2] border-2 border-[#2c78b8] flex items-center justify-center">确定</div>
        <div className="w-[73px] h-[26px] bg-[#e2e2e2] border border-[#b4b4b4] flex items-center justify-center">取消</div>
      </div>
      <div className="absolute right-[1px] bottom-[1px] w-[8px] h-[8px] bg-[radial-gradient(#aaa_1px,transparent_1px)] bg-[length:3px_3px]" />
      <div className="absolute left-[108px] top-[121px] w-[64px] h-[64px] rounded-full border-[4px] border-[#efb59c] opacity-95" />
      <svg width="14" height="21" viewBox="0 0 14 21" className="absolute left-[139px] top-[152px]"><path d="M1 1v15l4-3.500 2.500 6 2.500-1-2.500-6H13z" fill="#fff" stroke="#222" /></svg>
    </div>
  );
}

export default function App() {
  return (
    <div className="relative w-[1728px] h-[1080px] overflow-hidden bg-white flex flex-col font-['Noto_Sans_CJK_SC','Noto_Sans',sans-serif]">
      <TitleBar />
      <TabRow />
      <Ribbon />
      <FormulaBar />
      <Sheet />
      <div className="h-[68px] shrink-0 bg-white pt-[8px] text-center text-[45px] leading-[58px] font-bold text-black tracking-[0.2px] whitespace-nowrap">
        随后点击添加条件将次要关键字设置为销售金额然后将次序设置为降序
      </div>
      <Taskbar />
      <div className="absolute left-[1519px] top-[1038px] w-[40px] h-[2px] bg-[#bbb]" />
      <SortDialog />
      <div className="absolute left-[1690px] top-[387px] w-[38px] h-[44px] bg-[#1f2033] flex items-center pl-[27px] gap-[4px]">
        <div className="w-[5px] h-[16px] bg-white shrink-0" /><div className="w-[5px] h-[16px] bg-white shrink-0" />
      </div>
      <div className="absolute left-[1632px] top-[374px] w-[70px] h-[70px] rounded-full bg-[#3c3f58] text-white text-[14px] leading-[70px] text-center font-['Noto_Sans',sans-serif]">00:00:51</div>
    </div>
  );
}
